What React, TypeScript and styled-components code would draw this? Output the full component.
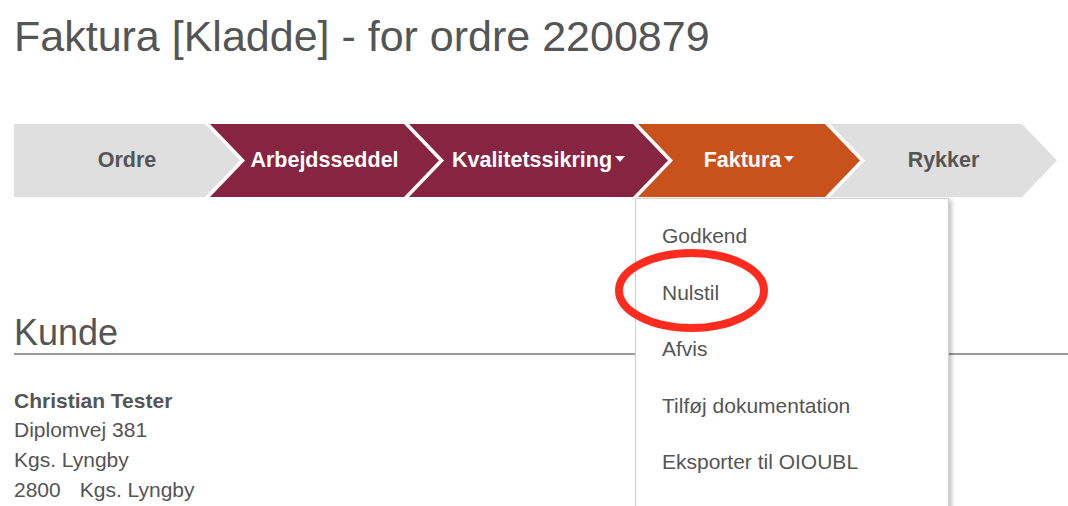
import React from 'react';
import styled, {createGlobalStyle} from 'styled-components';

const GlobalStyle = createGlobalStyle`
    html, body {
        margin: 0;
        padding: 0;
        background: #ffffff;
    }

    body {
        font-family: "Liberation Sans", Arial, Helvetica, sans-serif;
        color: #555555;
    }
`;

type Tone = 'done' | 'active' | 'idle';

const ARROW = 35;

const toneBackground: Record<Tone, string> = {
    done: '#862442',
    active: '#c9511c',
    idle: '#dfdfdf',
};

const steps: {label: string; width: number; tone: Tone; caret?: boolean; menu?: boolean}[] = [
    {label: 'Ordre', width: 226, tone: 'idle'},
    {label: 'Arbejdsseddel', width: 229, tone: 'done'},
    {label: 'Kvalitetssikring', width: 259, tone: 'done', caret: true},
    {label: 'Faktura', width: 222, tone: 'active', caret: true, menu: true},
    {label: 'Rykker', width: 227, tone: 'idle'},
];

const menuItems = ['Godkend', 'Nulstil', 'Afvis', 'Tilføj dokumentation', 'Eksporter til OIOUBL'];

const App = () => {
    return (
        <>
            <GlobalStyle/>
            <Page>
                <Title>{'Faktura [Kladde] - for ordre 2200879'}</Title>
                <Steps>
                    {steps.map((step, index) => (
                        <Step
                            key={step.label}
                            $width={step.width}
                            $first={index === 0}
                        >
                            <StepShape
                                $tone={step.tone}
                                $first={index === 0}
                            >
                                {step.label}
                                {step.caret && <Caret/>}
                            </StepShape>
                            {step.menu && (
                                <Menu>
                                    {menuItems.map((item) => (
                                        <MenuItem key={item}>{item}</MenuItem>
                                    ))}
                                    <Highlight
                                        width='153'
                                        height='83'
                                        viewBox='0 0 153 83'
                                    >
                                        <ellipse
                                            cx='76.5'
                                            cy='41.5'
                                            rx='72.5'
                                            ry='37.5'
                                            fill='none'
                                            stroke='#ff2b1e'
                                            strokeWidth='8'
                                        />
                                    </Highlight>
                                </Menu>
                            )}
                        </Step>
                    ))}
                </Steps>
                <SectionHeading>{'Kunde'}</SectionHeading>
                <Address>
                    <Name>{'Christian Tester'}</Name>
                    <AddressLine>{'Diplomvej 381'}</AddressLine>
                    <AddressLine>{'Kgs. Lyngby'}</AddressLine>
                    <AddressLine>
                        <PostCode>{'2800'}</PostCode>
                        {'Kgs. Lyngby'}
                    </AddressLine>
                </Address>
            </Page>
        </>
    );
};

const Page = styled.div`
    position: relative;
    height: 506px;
    overflow: hidden;
    padding-left: 14px;
    box-sizing: border-box;
`;

const Title = styled.h1`
    margin: 0;
    padding-top: 12px;
    font-size: 43px;
    line-height: 48px;
    font-weight: 400;
    color: #555555;
`;

const Steps = styled.ul`
    display: flex;
    list-style: none;
    margin: 64px 0 0;
    padding: 0;
    height: 73px;
`;

const Step = styled.li<{$width: number; $first: boolean}>`
    position: relative;
    flex: 0 0 auto;
    width: ${(p) => p.$width}px;
    margin-left: ${(p) => (p.$first ? 0 : -(ARROW - 5))}px;
`;

const StepShape = styled.div<{$tone: Tone; $first: boolean}>`
    display: flex;
    align-items: center;
    justify-content: center;
    height: 73px;
    background: ${(p) => toneBackground[p.$tone]};
    color: ${(p) => (p.$tone === 'idle' ? '#555555' : '#ffffff')};
    font-size: 21.5px;
    font-weight: 700;
    line-height: 73px;
    clip-path: ${(p) => (p.$first ?
        `polygon(0 0, calc(100% - ${ARROW}px) 0, 100% 50%, calc(100% - ${ARROW}px) 100%, 0 100%)` :
        `polygon(0 0, calc(100% - ${ARROW}px) 0, 100% 50%, calc(100% - ${ARROW}px) 100%, 0 100%, ${ARROW}px 50%)`)};
`;

const Caret = styled.span`
    display: inline-block;
    width: 0;
    height: 0;
    margin-left: 3px;
    margin-top: -3px;
    border-top: 6px solid #ffffff;
    border-left: 5.5px solid transparent;
    border-right: 5.5px solid transparent;
`;

const Menu = styled.div`
    position: absolute;
    z-index: 10;
    top: calc(100% + 1px);
    left: -3px;
    width: 314px;
    height: 330px;
    box-sizing: border-box;
    padding-top: 9px;
    background: #ffffff;
    border: 1px solid #cfcfcf;
    box-shadow: 3px 2px 4px rgba(0, 0, 0, 0.22);
`;

const MenuItem = styled.div`
    height: 56.5px;
    line-height: 56px;
    padding-left: 26px;
    font-size: 21px;
    color: #555555;
    white-space: nowrap;
`;

const Highlight = styled.svg`
    position: absolute;
    left: -21px;
    top: 50px;
    pointer-events: none;
`;

const SectionHeading = styled.h2`
    margin: 116px 0 0;
    font-size: 36px;
    line-height: 40px;
    font-weight: 400;
    color: #555555;
    border-bottom: 2px solid #9a9a9a;
`;

const Address = styled.div`
    margin-top: 32px;
    font-size: 21px;
    color: #555555;
`;

const Name = styled.div`
    font-weight: 700;
    line-height: 28px;
`;

const AddressLine = styled.div`
    line-height: 30px;
`;

const PostCode = styled.span`
    margin-right: 19px;
`;

export default App;
